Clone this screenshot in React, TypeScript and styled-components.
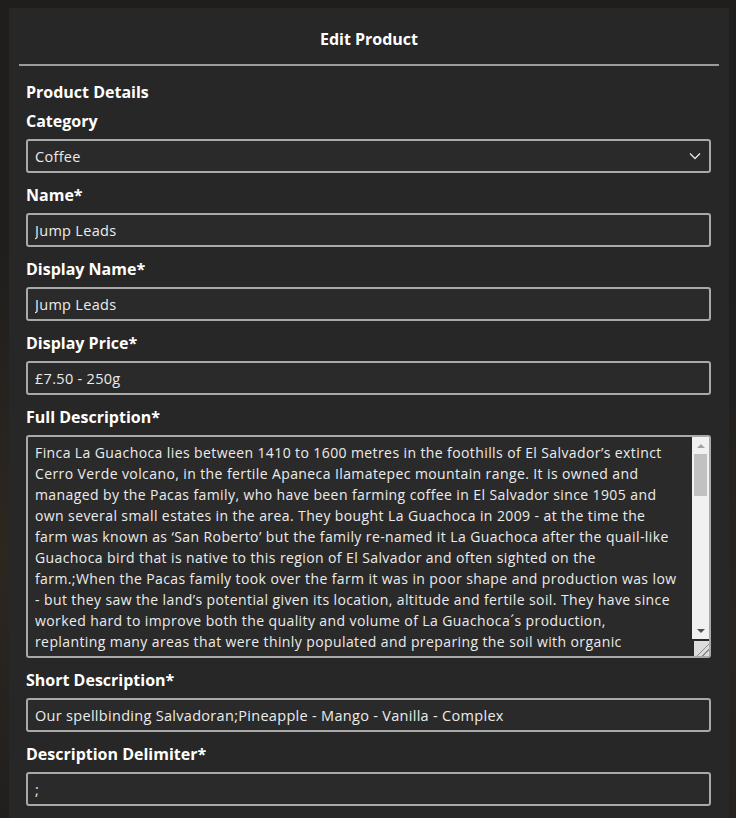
import React from 'react';
import styled, { createGlobalStyle } from 'styled-components';

const fullDescription = [
    'Finca La Guachoca lies between 1410 to 1600 metres in the foothills of El Salvador’s extinct',
    'Cerro Verde volcano, in the fertile Apaneca Ilamatepec mountain range. It is owned and',
    'managed by the Pacas family, who have been farming coffee in El Salvador since 1905 and',
    'own several small estates in the area. They bought La Guachoca in 2009 - at the time the',
    'farm was known as ‘San Roberto’ but the family re-named it La Guachoca after the quail-like',
    'Guachoca bird that is native to this region of El Salvador and often sighted on the',
    'farm.;When the Pacas family took over the farm it was in poor shape and production was low',
    '- but they saw the land’s potential given its location, altitude and fertile soil. They have since',
    'worked hard to improve both the quality and volume of La Guachoca´s production,',
    'replanting many areas that were thinly populated and preparing the soil with organic',
    'compost and nutrients to ensure that all the new plants were set up for healthy growth and',
    'good yields for many years to come.',
].join('\n');

const App: React.FC = () => {
    return (
        <>
            <GlobalStyle />
            <Panel>
                <Header>
                    <Title>Edit Product</Title>
                </Header>

                <Form onSubmit={(e) => e.preventDefault()}>
                    <SectionTitle>Product Details</SectionTitle>

                    <Field>
                        <Label>Category</Label>
                        <SelectWrap>
                            <Select defaultValue="coffee">
                                <option value="coffee">Coffee</option>
                                <option value="equipment">Equipment</option>
                            </Select>
                            <Chevron width="12" height="8" viewBox="0 0 12 8">
                                <path d="M1 1.5 L6 6.5 L11 1.5" fill="none" stroke="#e6e6e6" strokeWidth="1.3" />
                            </Chevron>
                        </SelectWrap>
                    </Field>

                    <Field>
                        <Label>Name*</Label>
                        <Input defaultValue="Jump Leads" />
                    </Field>

                    <Field>
                        <Label>Display Name*</Label>
                        <Input defaultValue="Jump Leads" />
                    </Field>

                    <Field>
                        <Label>Display Price*</Label>
                        <Input defaultValue="£7.50 - 250g" />
                    </Field>

                    <Field>
                        <Label>Full Description*</Label>
                        <TextAreaWrap>
                            <TextArea defaultValue={fullDescription} />
                            {/* headless browser hides native scrollbars, so draw one */}
                            <Scrollbar aria-hidden>
                                <ScrollButton><ArrowUp /></ScrollButton>
                                <Track><Thumb /></Track>
                                <ScrollButton><ArrowDown /></ScrollButton>
                            </Scrollbar>
                        </TextAreaWrap>
                    </Field>

                    <Field>
                        <Label>Short Description*</Label>
                        <Input defaultValue="Our spellbinding Salvadoran;Pineapple - Mango - Vanilla - Complex" />
                    </Field>

                    <Field>
                        <Label>Description Delimiter*</Label>
                        <Input defaultValue=";" />
                    </Field>
                </Form>
            </Panel>
        </>
    );
};

const GlobalStyle = createGlobalStyle`
  html, body {
    margin: 0;
    padding: 0;
  }
  body {
    padding: 8px;
    background-color: #1f1e1d;
    background-image:
      radial-gradient(ellipse at 0% 60%, rgba(70, 55, 40, 0.35), transparent 40%),
      radial-gradient(ellipse at 100% 70%, rgba(60, 50, 40, 0.35), transparent 40%);
    font-family: 'Open Sans', 'Noto Sans', sans-serif;
    color: #fff;
    overflow: hidden;
  }
`;

const Panel = styled.div`
  width: 720px;
  min-height: 900px;
  margin-left: 1px;
  background-color: #272727;
`;

const Header = styled.div`
  margin: 0 10px;
  padding: 20px 0 14px;
  border-bottom: 2px solid #9b9b9b;
  text-align: center;
`;

const Title = styled.h1`
  margin: 0;
  font-size: 16px;
  line-height: 22px;
  font-weight: 700;
  color: #fff;
`;

const Form = styled.form`
  display: flex;
  flex-direction: column;
  padding: 0 18px 0 17px;
`;

const SectionTitle = styled.h2`
  margin: 16px 0 -3px;
  font-size: 16px;
  line-height: 20px;
  font-weight: 700;
  color: #fff;
`;

const Field = styled.div`
  display: flex;
  flex-direction: column;
`;

const Label = styled.label`
  margin: 12px 0 8px;
  font-size: 16px;
  line-height: 20px;
  font-weight: 700;
  color: #fff;
`;

const Input = styled.input`
  box-sizing: border-box;
  width: 100%;
  height: 34px;
  padding: 0 7px;
  border: 2px solid #a9a9a9;
  border-radius: 3px;
  background-color: #2a2a2a;
  color: #ececec;
  font-family: 'Open Sans', 'Noto Sans', sans-serif;
  font-size: 14.5px;
  letter-spacing: 0.3px;
  outline: none;
`;

const SelectWrap = styled.div`
  position: relative;
`;

const Select = styled.select`
  box-sizing: border-box;
  width: 100%;
  height: 34px;
  padding: 0 7px;
  border: 2px solid #a9a9a9;
  border-radius: 3px;
  background-color: #2a2a2a;
  color: #ececec;
  font-family: 'Open Sans', 'Noto Sans', sans-serif;
  font-size: 14.5px;
  letter-spacing: 0.3px;
  appearance: none;
  outline: none;
`;

const Chevron = styled.svg`
  position: absolute;
  right: 10px;
  top: 13px;
  pointer-events: none;
`;

const TextAreaWrap = styled.div`
  position: relative;
`;

const TextArea = styled.textarea`
  display: block;
  box-sizing: border-box;
  width: 100%;
  height: 223px;
  padding: 5px 24px 5px 7px;
  border: 2px solid #a9a9a9;
  border-radius: 3px;
  background-color: #2a2a2a;
  color: #ececec;
  font-family: 'Open Sans', 'Noto Sans', sans-serif;
  font-size: 14px;
  line-height: 21px;
  letter-spacing: 0.4px;
  white-space: pre;
  overflow: hidden;
  resize: vertical;
  outline: none;

  &::-webkit-resizer {
    background-color: #dcdcdc;
    background-image: linear-gradient(
      135deg,
      transparent 58%,
      #8a8a8a 58% 63%,
      transparent 63% 76%,
      #8a8a8a 76% 81%,
      transparent 81%
    );
  }
`;

const Scrollbar = styled.div`
  position: absolute;
  top: 2px;
  right: 2px;
  bottom: 19px;
  width: 17px;
  display: flex;
  flex-direction: column;
  background: #f1f1f1;
  pointer-events: none;
`;

const ScrollButton = styled.div`
  height: 17px;
  display: flex;
  align-items: center;
  justify-content: center;
`;

const ArrowUp = styled.span`
  width: 0;
  height: 0;
  border-left: 4px solid transparent;
  border-right: 4px solid transparent;
  border-bottom: 4px solid #a3a3a3;
`;

const ArrowDown = styled.span`
  width: 0;
  height: 0;
  border-left: 4px solid transparent;
  border-right: 4px solid transparent;
  border-top: 4px solid #505050;
`;

const Track = styled.div`
  flex: 1;
  padding: 0 2px;
`;

const Thumb = styled.div`
  height: 42px;
  background: #c1c1c1;
`;

export default App;
